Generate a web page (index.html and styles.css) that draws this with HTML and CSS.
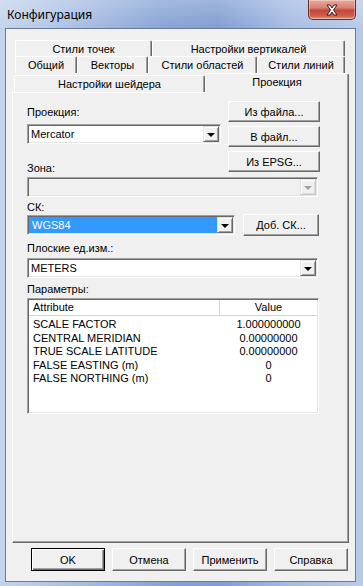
FILE: index.html
```html
<!DOCTYPE html>
<html lang="ru">
<head>
<meta charset="utf-8">
<title>Конфигурация</title>
<link rel="stylesheet" href="styles.css">
</head>
<body>
<div class="window">
  <div class="titlebar">
    <span class="title">Конфигурация</span>
    <div class="close">
      <svg width="46" height="18" viewBox="0 0 46 18">
        <path d="M18 4 L21 4 L23 7 L25 4 L28 4 L24.5 9 L28 14 L25 14 L23 11 L21 14 L18 14 L21.5 9 Z" fill="#fff" stroke="#3a1a1a" stroke-width="1" stroke-linejoin="round"/>
      </svg>
    </div>
  </div>
  <div class="client">
    <div class="tabs">
      <div class="tabrow r1">
        <div class="tab w-tochek">Стили точек</div>
        <div class="tab w-vert">Настройки вертикалей</div>
      </div>
      <div class="tabrow r2">
        <div class="tab w-obsh">Общий</div>
        <div class="tab w-vect">Векторы</div>
        <div class="tab w-obl">Стили областей</div>
        <div class="tab w-lin">Стили линий</div>
      </div>
      <div class="tabrow r3">
        <div class="tab w-shader">Настройки шейдера</div>
        <div class="tab w-proj active">Проекция</div>
      </div>
      <div class="panel">
        <div class="proj-row">
          <div class="left-col">
            <div class="label">Проекция:</div>
            <div class="combo combo-proj">
              <div class="combo-text">Mercator</div>
              <div class="combo-btn"><span class="tri"></span></div>
            </div>
            <div class="label zona-label">Зона:</div>
          </div>
          <div class="right-col">
            <div class="btn btn-side">Из файла...</div>
            <div class="btn btn-side">В файл...</div>
            <div class="btn btn-side">Из EPSG...</div>
          </div>
        </div>
        <div class="combo combo-wide combo-disabled zone-combo">
          <div class="combo-text"></div>
          <div class="combo-btn"><span class="tri"></span></div>
        </div>
        <div class="label ck-label">СК:</div>
        <div class="ck-row">
          <div class="combo combo-ck">
            <div class="combo-text"><span class="sel">WGS84</span></div>
            <div class="combo-btn"><span class="tri"></span></div>
          </div>
          <div class="btn btn-ck">Доб. СК...</div>
        </div>
        <div class="label units-label">Плоские ед.изм.:</div>
        <div class="combo combo-wide units-combo">
          <div class="combo-text">METERS</div>
          <div class="combo-btn"><span class="tri"></span></div>
        </div>
        <div class="label params-label">Параметры:</div>
        <div class="listview">
          <div class="lv-header">
            <div class="lv-h lv-h-attr">Attribute</div>
            <div class="lv-h lv-h-val">Value</div>
          </div>
          <div class="lv-body">
            <div class="lv-row"><span class="c-attr">SCALE FACTOR</span><span class="c-val">1.000000000</span></div>
            <div class="lv-row"><span class="c-attr">CENTRAL MERIDIAN</span><span class="c-val">0.00000000</span></div>
            <div class="lv-row"><span class="c-attr">TRUE SCALE LATITUDE</span><span class="c-val">0.00000000</span></div>
            <div class="lv-row"><span class="c-attr">FALSE EASTING (m)</span><span class="c-val">0</span></div>
            <div class="lv-row"><span class="c-attr">FALSE NORTHING (m)</span><span class="c-val">0</span></div>
          </div>
        </div>
      </div>
    </div>
    <div class="bottom">
      <div class="btn btn-bottom btn-default">OK</div>
      <div class="btn btn-bottom">Отмена</div>
      <div class="btn btn-bottom">Применить</div>
      <div class="btn btn-bottom">Справка</div>
    </div>
  </div>
</div>
</body>
</html>
```
FILE: styles.css
```css
* { box-sizing: border-box; }
html, body { margin: 0; padding: 0; }
body {
  width: 363px;
  height: 586px;
  overflow: hidden;
  font-family: "Liberation Sans", Arial, sans-serif;
  font-size: 11px;
  color: #000;
}
.window {
  width: 363px;
  height: 586px;
  display: flex;
  flex-direction: column;
  background:
    linear-gradient(to bottom, rgba(255,255,255,0.25), rgba(255,255,255,0) 30px),
    linear-gradient(to right, #c3d4ec 0%, #aac0e4 20%, #86a3d4 45%, #7f9dd2 60%, #a5bce3 80%, #b8cbe9 100%);
}
.titlebar {
  height: 28px;
  display: flex;
  justify-content: space-between;
  align-items: flex-start;
  padding-left: 7px;
  padding-right: 7px;
}
.title {
  font-family: "Noto Sans", "Open Sans", sans-serif;
  font-size: 12px;
  line-height: 30px;
  color: #000;
}
.close {
  width: 48px;
  height: 20px;
  border: 1px solid #6b2b26;
  border-top: none;
  border-radius: 0 0 5px 5px;
  background: linear-gradient(to bottom, #e9a99c 0%, #d88272 40%, #c2473a 55%, #cf5f4b 85%, #e39a83 100%);
  box-shadow: inset 0 0 0 1px rgba(255,255,255,0.35);
  display: flex;
  align-items: center;
  justify-content: center;
}
.client {
  margin: 0 7px 4px 5px;
  border: 1px solid #6c7a96;
  background: #f0f0f0;
  flex: 1;
  display: flex;
  flex-direction: column;
}
.tabs {
  margin: 11px 0 0 6px;
  width: 337px;
}
.tabrow {
  display: flex;
  padding-left: 3px;
}
.r1 { height: 16px; }
.r2 { height: 17px; }
.r3 { height: 19px; padding-left: 2px; align-items: flex-end; }
.tab {
  height: 100%;
  border-top: 1px solid #fff;
  border-left: 1px solid #fff;
  border-right: 1px solid #696969;
  box-shadow: inset -1px 0 #a0a0a0;
  border-radius: 2px 2px 0 0;
  display: flex;
  align-items: center;
  justify-content: center;
  white-space: nowrap;
  background: #f0f0f0;
}
.r3 .tab { height: 17px; }
.r3 .tab.active {
  height: 20px;
  margin-bottom: -1px;
  position: relative;
  z-index: 1;
  padding-bottom: 3px;
}
.w-tochek { width: 137px; }
.w-vert { width: 193px; }
.w-obsh { width: 62px; }
.w-vect { width: 71px; }
.w-obl { width: 109px; }
.w-lin { width: 88px; }
.w-shader { width: 191px; }
.w-proj { width: 144px; }
.panel {
  height: 451px;
  border-top: 1px solid #fff;
  border-left: 1px solid #fff;
  border-right: 1px solid #696969;
  border-bottom: 1px solid #696969;
  box-shadow: inset -1px -1px #a0a0a0;
  padding: 8px 0 0 14px;
}
.label {
  height: 14px;
  line-height: 14px;
  white-space: nowrap;
}
.proj-row {
  display: flex;
  gap: 7px;
}
.left-col {
  width: 194px;
  padding-top: 4px;
}
.right-col {
  width: 92px;
  display: flex;
  flex-direction: column;
  gap: 4px;
}
.combo {
  height: 20px;
  display: flex;
  border: 1px solid;
  border-color: #a0a0a0 #fff #fff #a0a0a0;
  box-shadow: inset 1px 1px #696969, inset -1px -1px #e3e3e3;
  background: #fff;
  padding: 1px;
}
.combo-text {
  flex: 1;
  line-height: 16px;
  padding-left: 2px;
  white-space: nowrap;
  overflow: hidden;
}
.combo-btn {
  width: 16px;
  height: 16px;
  background: #f0f0f0;
  border: 1px solid;
  border-color: #e3e3e3 #696969 #696969 #e3e3e3;
  box-shadow: inset 1px 1px #fff, inset -1px -1px #a0a0a0;
  display: flex;
  align-items: center;
  justify-content: center;
}
.tri {
  width: 0;
  height: 0;
  border-left: 4px solid transparent;
  border-right: 4px solid transparent;
  border-top: 4px solid #000;
  margin-top: 1px;
}
.combo-proj { margin-top: 5px; width: 194px; }
.zona-label { margin-top: 17px; }
.combo-wide { width: 291px; }
.zone-combo { margin-top: 2px; }
.combo-disabled { background: #f0f0f0; }
.combo-disabled .combo-btn {
  border-color: #e3e3e3 #c8c8c8 #c8c8c8 #e3e3e3;
  box-shadow: inset 1px 1px #fff, inset -1px -1px #dcdcdc;
}
.combo-disabled .tri { border-top-color: #a0a0a0; }
.ck-label { margin-top: 3px; }
.ck-row {
  display: flex;
  align-items: center;
  gap: 8px;
  height: 22px;
}
.combo-ck { width: 208px; }
.combo-ck .combo-text { padding-left: 0; }
.sel {
  display: block;
  height: 16px;
  background: #3399ff;
  color: #fff;
  padding-left: 3px;
}
.units-label { margin-top: 5px; }
.units-combo { margin-top: 3px; }
.params-label { margin-top: 4px; }
.btn {
  background: #f0f0f0;
  border: 1px solid;
  border-color: #fff #696969 #696969 #fff;
  box-shadow: inset -1px -1px #a0a0a0;
  display: flex;
  align-items: center;
  justify-content: center;
  white-space: nowrap;
}
.btn-side { height: 21px; width: 92px; }
.btn-ck { width: 76px; height: 22px; }
.listview {
  margin-top: 2px;
  width: 292px;
  height: 116px;
  border: 1px solid;
  border-color: #a0a0a0 #fff #fff #a0a0a0;
  box-shadow: inset 1px 1px #696969, inset -1px -1px #e3e3e3;
  background: #fff;
  padding: 1px;
}
.lv-header {
  display: flex;
  height: 16px;
}
.lv-h {
  height: 16px;
  line-height: 15px;
  background: #fff;
  border-bottom: 1px solid #d5d5d5;
}
.lv-h-attr {
  width: 191px;
  padding-left: 4px;
  border-right: 1px solid #d5d5d5;
}
.lv-h-val {
  flex: 1;
  text-align: center;
}
.lv-body { padding-top: 2px; }
.lv-row {
  display: flex;
  height: 13.5px;
  line-height: 13.5px;
  white-space: nowrap;
}
.c-attr { width: 191px; padding-left: 4px; }
.c-val { flex: 1; text-align: center; }
.bottom {
  display: flex;
  justify-content: flex-end;
  gap: 7px;
  padding-right: 7px;
  margin-top: 5px;
}
.btn-bottom { width: 74px; height: 23px; }
.btn-default {
  border: 1px solid #000;
  box-shadow: inset 1px 1px #fff, inset -1px -1px #696969, inset -2px -2px #a0a0a0;
}
```
